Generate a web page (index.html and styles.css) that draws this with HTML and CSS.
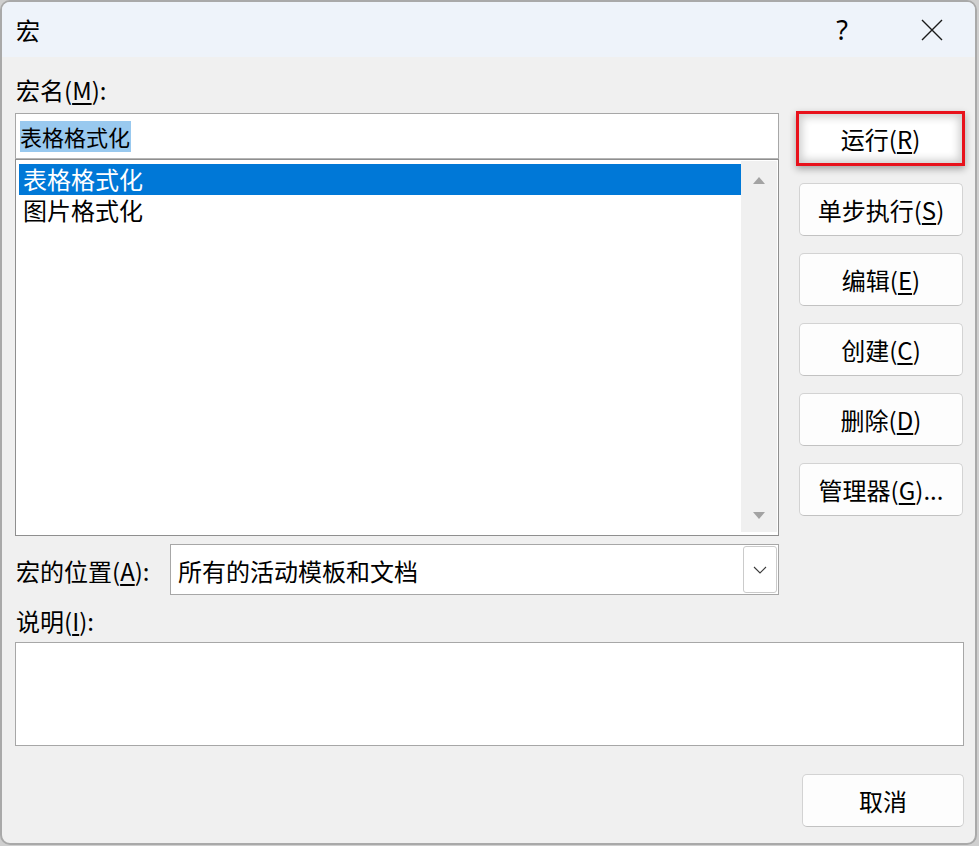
FILE: index.html
```html
<!DOCTYPE html>
<html lang="zh-CN">
<head>
<meta charset="utf-8">
<title>宏</title>
<link rel="stylesheet" href="styles.css">
</head>
<body>
<div class="dialog">
  <div class="titlebar">
    <span class="title">宏</span>
    <div class="title-controls">
      <span class="help">?</span>
      <span class="close">
        <svg width="22" height="22" viewBox="0 0 22 22"><path d="M1 1 L21 21 M21 1 L1 21" stroke="#1a1a1a" stroke-width="1.4" fill="none"/></svg>
      </span>
    </div>
  </div>
  <div class="content">
    <div class="main">
      <div class="left">
        <div class="label label-top">宏名(<u>M</u>):</div>
        <div class="input"><span class="sel">表格格式化</span></div>
        <div class="list">
          <div class="items">
            <div class="item selected">表格格式化</div>
            <div class="item">图片格式化</div>
          </div>
          <div class="scrollbar">
            <span class="arrow up"></span>
            <span class="arrow down"></span>
          </div>
        </div>
        <div class="loc-row">
          <div class="label loc-label">宏的位置(<u>A</u>):</div>
          <div class="combo">
            <span class="combo-text">所有的活动模板和文档</span>
            <span class="drop">
              <svg width="14" height="8" viewBox="0 0 14 8"><path d="M1 1 L7 7 L13 1" stroke="#3a3a3a" stroke-width="1.1" fill="none"/></svg>
            </span>
          </div>
        </div>
        <div class="label label-desc">说明(<u>I</u>):</div>
      </div>
      <div class="buttons">
        <div class="focus-frame"><div class="btn btn-default">运行(<u>R</u>)</div></div>
        <div class="btn">单步执行(<u>S</u>)</div>
        <div class="btn">编辑(<u>E</u>)</div>
        <div class="btn">创建(<u>C</u>)</div>
        <div class="btn">删除(<u>D</u>)</div>
        <div class="btn">管理器(<u>G</u>)...</div>
      </div>
    </div>
    <div class="desc"></div>
    <div class="footer">
      <div class="btn btn-cancel">取消</div>
    </div>
  </div>
</div>
</body>
</html>
```

FILE: styles.css
```css
* { box-sizing: border-box; }

html, body {
  margin: 0;
  padding: 0;
}

body {
  width: 979px;
  height: 846px;
  background: #cfcfcf;
  font-family: "Noto Sans CJK SC", "Noto Sans", sans-serif;
  font-size: 24px;
  color: #000;
  overflow: hidden;
}

u {
  text-decoration: underline;
  text-decoration-thickness: 1.5px;
  text-underline-offset: 3px;
}

.dialog {
  width: 977px;
  height: 845px;
  border: 2px solid #a9a9a9;
  border-radius: 10px;
  background: #f0f0f0;
  overflow: hidden;
  display: flex;
  flex-direction: column;
}

.titlebar {
  height: 55px;
  background: #eef3fa;
  display: flex;
  align-items: center;
  justify-content: space-between;
  padding-left: 14px;
  padding-right: 20px;
  flex-shrink: 0;
}

.title {
  font-size: 24px;
  line-height: 32px;
  margin-top: 1px;
}

.title-controls {
  display: flex;
  align-items: center;
}

.help {
  width: 46px;
  text-align: center;
  font-family: "Noto Sans", "Liberation Sans", sans-serif;
  font-size: 27px;
  line-height: 32px;
  margin-right: 44px;
  margin-top: 0;
}

.close {
  width: 46px;
  height: 30px;
  display: flex;
  align-items: center;
  justify-content: center;
}

.content {
  padding: 0 11px 0 13px;
  display: flex;
  flex-direction: column;
  flex: 1;
}

.main {
  display: grid;
  grid-template-columns: 764px 164px;
  column-gap: 20px;
}

.left {
  display: flex;
  flex-direction: column;
}

.label {
  line-height: 32px;
  padding-left: 1px;
  white-space: nowrap;
}

.label-top {
  height: 56px;
  padding-top: 17px;
}

.input {
  height: 46px;
  border: 1px solid #a7a7a7;
  border-bottom-color: #b5b5b5;
  background: #fff;
  padding: 4px 0 0 4px;
}

.sel {
  display: inline-block;
  background: #99c9ef;
  font-size: 22px;
  line-height: 31px;
  height: 31px;
  padding-right: 1px;
}

.list {
  height: 377px;
  border: 1px solid #8f8f8f;
  background: #fff;
  display: flex;
  padding: 4px 1px 3px 3px;
}

.items {
  flex: 1;
}

.item {
  height: 31px;
  line-height: 28px;
  padding-top: 1px;
  padding-left: 4px;
  font-size: 24px;
}

.item.selected {
  background: #0078d7;
  color: #fff;
}

.scrollbar {
  width: 36px;
  background: #f0f0f0;
  margin-top: -3px;
  display: flex;
  flex-direction: column;
  justify-content: space-between;
  align-items: center;
  padding: 16px 0 13px 0;
}

.arrow {
  width: 0;
  height: 0;
  border-left: 6px solid transparent;
  border-right: 6px solid transparent;
}

.arrow.up {
  border-bottom: 7px solid #a3a3a3;
}

.arrow.down {
  border-top: 7px solid #a3a3a3;
}

.loc-row {
  display: flex;
  align-items: center;
  margin-top: 8px;
  height: 51px;
}

.loc-label {
  width: 155px;
  flex-shrink: 0;
  margin-top: 3px;
}

.combo {
  flex: 1;
  height: 51px;
  border: 1px solid #a7a7a7;
  background: #fff;
  display: flex;
  align-items: center;
  justify-content: space-between;
  padding: 1px;
  padding-left: 7px;
}

.combo-text {
  line-height: 32px;
  margin-top: 2px;
}

.drop {
  width: 34px;
  height: 47px;
  border: 1px solid #cbcbcb;
  border-radius: 3px;
  display: flex;
  align-items: center;
  justify-content: center;
  background: #fff;
}

.label-desc {
  height: 47px;
  padding-top: 10px;
}

.buttons {
  display: flex;
  flex-direction: column;
  padding-top: 56px;
  gap: 17px;
}

.btn {
  height: 53px;
  background: #fdfdfd;
  border: 1px solid #d3d3d3;
  border-bottom-color: #c2c2c2;
  border-radius: 5px;
  display: flex;
  align-items: center;
  justify-content: center;
  font-size: 24px;
  line-height: 32px;
  white-space: nowrap;
}

.focus-frame {
  height: 55px;
  margin: -2px -2px 0 -3px;
  border: 3px solid #e8121c;
  box-shadow: 0 3px 7px rgba(0, 0, 0, 0.32);
  background: #fff;
}

.btn-default {
  height: 49px;
  border: none;
  border-radius: 0;
  background: #fff;
  box-shadow: inset 0 0 8px 3px rgba(0, 0, 0, 0.2);
}

.desc {
  height: 104px;
  border: 1px solid #a7a7a7;
  background: #fff;
}

.footer {
  display: flex;
  justify-content: flex-end;
  padding-top: 28px;
}

.btn-cancel {
  width: 162px;
}
```
